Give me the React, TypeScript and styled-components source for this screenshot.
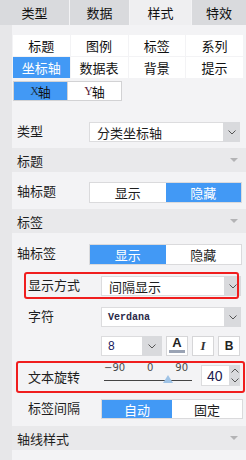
import React from 'react';
import styled, { createGlobalStyle } from 'styled-components';

const GlobalStyle = createGlobalStyle`
    html, body {
        margin: 0;
        padding: 0;
        background: #f3f3f5;
    }
    body {
        font-family: 'Noto Sans CJK SC', 'Noto Sans', sans-serif;
        font-size: 13px;
        color: #1e1e1e;
    }
`;

const BLUE = '#4299f5';
const RED = '#f01e1e';

const Page = styled.div`
    width: 246px;
    height: 460px;
    display: flex;
    flex-direction: column;
    background: #f3f3f5;
    overflow: hidden;
`;

const TabBar = styled.div`
    display: grid;
    grid-template-columns: 69px 59px 61px 54px;
    column-gap: 1px;
    height: 25px;
    flex-shrink: 0;
`;

interface IActive {
    $active?: boolean;
}

const Tab = styled.div<IActive>`
    display: flex;
    align-items: center;
    justify-content: center;
    font-size: 13px;
    color: #111;
    background: ${p => (p.$active ? '#efeff1' : '#d9dadd')};
`;

const Body = styled.div`
    flex: 1;
    display: flex;
    flex-direction: row;
`;

const Strip = styled.div`
    width: 12px;
    background: #e7e7e9;
`;

const Main = styled.div`
    flex: 1;
    display: flex;
    flex-direction: column;
`;

const SubGrid = styled.div`
    margin: 10px 3px 0 1px;
    display: grid;
    grid-template-columns: repeat(4, 1fr);
    grid-auto-rows: 21px;
    gap: 1px;
`;

const SubCell = styled.div<IActive>`
    display: flex;
    align-items: center;
    justify-content: center;
    font-size: 13px;
    background: ${p => (p.$active ? BLUE : '#fff')};
    color: ${p => (p.$active ? '#fff' : '#111')};
`;

const AxisTabs = styled.div`
    margin: 3px 0 0 1px;
    display: flex;
    height: 20px;
`;

const AxisTab = styled.div<IActive>`
    width: 55px;
    box-sizing: border-box;
    border: 1px solid #d2d2d4;
    margin-right: -1px;
    display: flex;
    align-items: center;
    justify-content: center;
    font-size: 13px;
    background: ${p => (p.$active ? BLUE : '#fff')};
    color: #111;
    span {
        font-family: 'Liberation Serif', serif;
        font-size: 12px;
        letter-spacing: -1px;
        color: ${p => (p.$active ? '#1b3550' : '#5a2238')};
    }
`;

interface IRowProps {
    $top: number;
    $indent?: boolean;
}

const Row = styled.div<IRowProps>`
    margin-top: ${p => p.$top}px;
    display: flex;
    align-items: flex-start;
    padding-left: ${p => (p.$indent ? 16 : 5)}px;
`;

const Label = styled.div<{ $width: number; $pad?: number }>`
    width: ${p => p.$width}px;
    flex-shrink: 0;
    font-size: 13px;
    line-height: 18px;
    padding-top: ${p => p.$pad ?? 0}px;
    color: #1e1e1e;
`;

const SelectBox = styled.div<{ $width: number }>`
    width: ${p => p.$width}px;
    height: 20px;
    box-sizing: border-box;
    display: flex;
    background: #fff;
    border: 1px solid #dcdcde;
`;

const SelectText = styled.div<{ $mono?: boolean }>`
    flex: 1;
    display: flex;
    align-items: center;
    padding-left: ${p => (p.$mono ? 6 : 7)}px;
    font-family: ${p =>
        p.$mono ? "'Liberation Mono', monospace" : "'Noto Sans CJK SC', sans-serif"};
    font-size: ${p => (p.$mono ? '10px' : '13px')};
    font-weight: ${p => (p.$mono ? 'bold' : 'normal')};
    color: ${p => (p.$mono ? '#2a2a48' : '#1e1e1e')};
`;

const SelectButton = styled.div<{ $width?: number }>`
    width: ${p => p.$width ?? 17}px;
    margin: -1px -1px -1px 0;
    background: #d9dadd;
    display: flex;
    align-items: center;
    justify-content: center;
`;

const Toggle = styled.div<{ $width: number; $height?: number }>`
    width: ${p => p.$width}px;
    height: ${p => p.$height ?? 21}px;
    box-sizing: border-box;
    border: 1px solid #dadadc;
    display: flex;
    background: #fff;
`;

const ToggleHalf = styled.div<IActive>`
    flex: 1;
    display: flex;
    align-items: center;
    justify-content: center;
    font-size: 13px;
    background: ${p => (p.$active ? BLUE : '#fff')};
    color: ${p => (p.$active ? '#fff' : '#1e1e1e')};
`;

const SectionHeader = styled.div<{ $top: number }>`
    margin-top: ${p => p.$top}px;
    height: 24px;
    flex-shrink: 0;
    background: #e9e9eb;
    display: flex;
    align-items: center;
    justify-content: space-between;
    padding: 0 8px 0 5px;
    font-size: 13px;
    color: #1e1e1e;
    &::after {
        content: '';
        border-left: 4px solid transparent;
        border-right: 4px solid transparent;
        border-top: 4px solid #b3b3b5;
    }
`;

const Highlight = styled.div<{ $top: number; $height: number; $left: number; $width: number }>`
    position: relative;
    margin-top: ${p => p.$top}px;
    height: ${p => p.$height}px;
    &::after {
        content: '';
        position: absolute;
        pointer-events: none;
        top: 0;
        left: ${p => p.$left}px;
        width: ${p => p.$width}px;
        height: ${p => p.$height}px;
        box-sizing: border-box;
        border: 2px solid ${RED};
        border-radius: 3px;
    }
`;

const HighlightInner = styled.div<{ $pad: number }>`
    display: flex;
    align-items: flex-start;
    padding: ${p => p.$pad}px 0 0 16px;
`;

const FontTools = styled.div`
    margin: 9px 0 0 89px;
    display: flex;
    gap: 4px;
    height: 20px;
`;

const ToolButton = styled.div`
    width: 22px;
    height: 20px;
    box-sizing: border-box;
    background: #fff;
    border: 1px solid #d6d6d8;
    display: flex;
    align-items: center;
    justify-content: center;
`;

const ColorA = styled.div`
    display: flex;
    flex-direction: column;
    align-items: center;
    font-family: 'Liberation Sans', sans-serif;
    font-weight: bold;
    font-size: 13px;
    line-height: 12px;
    color: #222;
    margin-top: -2px;
    &::after {
        content: '';
        width: 16px;
        height: 3px;
        margin-top: 1px;
        background: #9aa3b4;
    }
`;

const ItalicI = styled.span`
    font-family: 'Liberation Serif', serif;
    font-style: italic;
    font-weight: bold;
    font-size: 13px;
    color: #333;
`;

const BoldB = styled.span`
    font-family: 'Liberation Sans', sans-serif;
    font-weight: bold;
    font-size: 12px;
    color: #222;
`;

const SizeText = styled.div`
    flex: 1;
    display: flex;
    align-items: center;
    padding-left: 6px;
    font-family: 'Liberation Sans', sans-serif;
    font-size: 12px;
    color: #1a1a60;
`;

const Slider = styled.div`
    position: relative;
    width: 88px;
    height: 26px;
    margin-left: 3px;
    margin-top: 1px;
`;

const Scale = styled.div`
    display: flex;
    justify-content: space-between;
    font-family: 'DejaVu Sans', sans-serif;
    font-size: 10px;
    line-height: 11px;
    color: #4a4a4a;
    padding: 0 4px 0 0;
`;

const Track = styled.div`
    margin-top: 7px;
    height: 1px;
    background: #444;
`;

const Thumb = styled.div`
    position: absolute;
    top: 13px;
    width: 0;
    height: 0;
    margin-left: -5px;
    border-left: 5px solid transparent;
    border-right: 5px solid transparent;
    border-bottom: 8px solid #9fc3e6;
`;

const NumberBox = styled.div`
    margin: 4px 0 0 9px;
    width: 39px;
    height: 21px;
    box-sizing: border-box;
    border: 1px solid #dcdcde;
    background: #fff;
    display: flex;
`;

const NumberText = styled.div`
    flex: 1;
    display: flex;
    align-items: center;
    padding-left: 5px;
    font-family: 'Liberation Sans', sans-serif;
    font-size: 14px;
    color: #1c2050;
`;

const Spinner = styled.div`
    width: 11px;
    margin: -1px -1px -1px 0;
    background: #d9dadd;
    display: flex;
    flex-direction: column;
    align-items: center;
    justify-content: space-around;
`;

const Chevron = ({ up }: { up?: boolean }) => (
    <svg width="8" height="5" viewBox="0 0 8 5">
        <path
            d={up ? 'M0.5 4.5 L4 1 L7.5 4.5' : 'M0.5 0.5 L4 4 L7.5 0.5'}
            fill="none"
            stroke="#555"
            strokeWidth="1"
        />
    </svg>
);

const Select = ({ width, text, mono }: { width: number; text: string; mono?: boolean }) => (
    <SelectBox $width={width}>
        <SelectText $mono={mono}>{text}</SelectText>
        <SelectButton>
            <Chevron />
        </SelectButton>
    </SelectBox>
);

const TABS = ['类型', '数据', '样式', '特效'];
const SUBTABS = ['标题', '图例', '标签', '系列', '坐标轴', '数据表', '背景', '提示'];

const rotation = 40;

export default function App() {
    const thumbLeft = ((rotation + 90) / 180) * 88;
    return (
        <>
            <GlobalStyle />
            <Page>
                <TabBar>
                    {TABS.map(t => (
                        <Tab key={t} $active={t === '样式'}>
                            {t}
                        </Tab>
                    ))}
                </TabBar>
                <Body>
                    <Strip />
                    <Main>
                        <SubGrid>
                            {SUBTABS.map(t => (
                                <SubCell key={t} $active={t === '坐标轴'}>
                                    {t}
                                </SubCell>
                            ))}
                        </SubGrid>
                        <AxisTabs>
                            <AxisTab $active>
                                <span>X</span>轴
                            </AxisTab>
                            <AxisTab>
                                <span>Y</span>轴
                            </AxisTab>
                        </AxisTabs>

                        <Row $top={21}>
                            <Label $width={72}>类型</Label>
                            <Select width={151} text="分类坐标轴" />
                        </Row>

                        <SectionHeader $top={6}>标题</SectionHeader>

                        <Row $top={10}>
                            <Label $width={72}>轴标题</Label>
                            <Toggle $width={153}>
                                <ToggleHalf>显示</ToggleHalf>
                                <ToggleHalf $active>隐藏</ToggleHalf>
                            </Toggle>
                        </Row>

                        <SectionHeader $top={6}>标签</SectionHeader>

                        <Row $top={11}>
                            <Label $width={72}>轴标签</Label>
                            <Toggle $width={153}>
                                <ToggleHalf $active>显示</ToggleHalf>
                                <ToggleHalf>隐藏</ToggleHalf>
                            </Toggle>
                        </Row>

                        <Highlight $top={7} $height={27} $left={12} $width={215}>
                            <HighlightInner $pad={4}>
                                <Label $width={73}>显示方式</Label>
                                <Select width={140} text="间隔显示" />
                            </HighlightInner>
                        </Highlight>

                        <Row $top={8} $indent>
                            <Label $width={73}>字符</Label>
                            <Select width={140} text="Verdana" mono />
                        </Row>

                        <FontTools>
                            <SelectBox $width={61}>
                                <SizeText>8</SizeText>
                                <SelectButton $width={20}>
                                    <Chevron />
                                </SelectButton>
                            </SelectBox>
                            <ToolButton>
                                <ColorA>A</ColorA>
                            </ToolButton>
                            <ToolButton>
                                <ItalicI>I</ItalicI>
                            </ToolButton>
                            <ToolButton>
                                <BoldB>B</BoldB>
                            </ToolButton>
                        </FontTools>

                        <Highlight $top={5} $height={32} $left={4} $width={229}>
                            <HighlightInner $pad={0}>
                                <Label $width={73} $pad={7}>
                                    文本旋转
                                </Label>
                                <Slider>
                                    <Scale>
                                        <span>−90</span>
                                        <span>0</span>
                                        <span>90</span>
                                    </Scale>
                                    <Track />
                                    <Thumb style={{ left: thumbLeft }} />
                                </Slider>
                                <NumberBox>
                                    <NumberText>{rotation}</NumberText>
                                    <Spinner>
                                        <Chevron up />
                                        <Chevron />
                                    </Spinner>
                                </NumberBox>
                            </HighlightInner>
                        </Highlight>

                        <Row $top={6} $indent>
                            <Label $width={73}>标签间隔</Label>
                            <Toggle $width={142} $height={20}>
                                <ToggleHalf $active>自动</ToggleHalf>
                                <ToggleHalf>固定</ToggleHalf>
                            </Toggle>
                        </Row>

                        <SectionHeader $top={7}>轴线样式</SectionHeader>
                    </Main>
                </Body>
            </Page>
        </>
    );
}
